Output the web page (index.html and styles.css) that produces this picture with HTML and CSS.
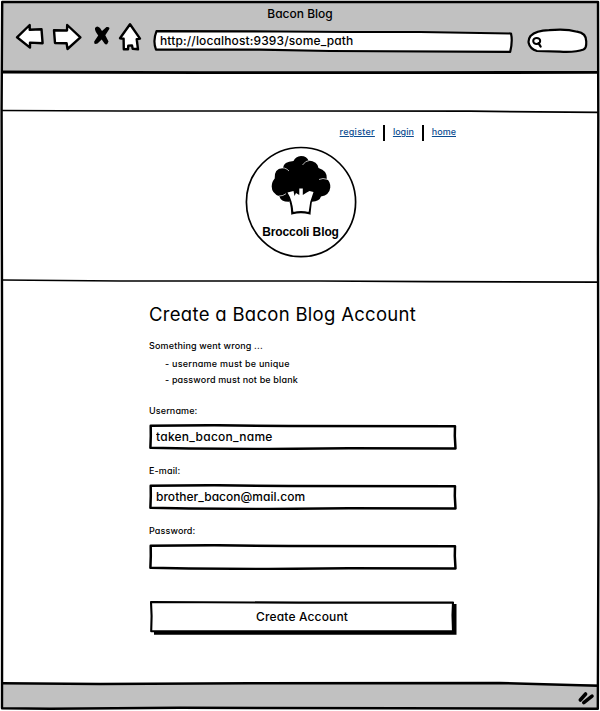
FILE: index.html
```html
<!DOCTYPE html>
<html lang="en">
<head>
<meta charset="utf-8">
<title>Bacon Blog</title>
<link rel="stylesheet" href="styles.css">
</head>
<body>
<svg class="defs" width="0" height="0" aria-hidden="true">
  <symbol id="field" viewBox="0 0 308 26">
    <path d="M1.7 1.7L65 1.2 140 2 306 2.2 305.8 12 306.5 24.5 200 24.2 120 25 40 24.4 1.4 23.8 1.8 12Z" fill="#fff" stroke="#000" stroke-width="2.5" stroke-linejoin="round"/>
  </symbol>
</svg>
<div class="window">
  <header class="chrome">
    <div class="title"><span>Bacon Blog</span></div>
    <div class="toolbar">
      <svg class="tools" width="144" height="32" viewBox="0 21 144 32" aria-hidden="true">
        <g fill="#fff" stroke="#000" stroke-width="2.4" stroke-linejoin="round">
          <path d="M17 37.3L29.7 25V29.7L41.5 29.2 42.6 43.2 30 42.6V47.6Z"/>
          <path d="M54 30.3L67 30.5 67.2 25 80.4 37.4 67.5 49 66.6 43.2 55 43Z"/>
          <path d="M130 24.2L140 38.6 136.7 39.2 138 49.3 132.7 48.8 132 45.5 128.3 45.6 128 49.3H123.8L123.6 38.7 120 38.2Z"/>
        </g>
        <path d="M95 28Q97 25 100 28L102 31 106.5 27Q110 26.5 109.3 29L105.3 35.3 108.5 41.5Q107 46 104.5 43.5L101.7 39.6 97.5 43.5Q93.6 45 94.2 41.4L98.2 35.5Q94.5 30.5 95 28Z"/>
      </svg>
      <div class="address">
        <svg width="360" height="24" viewBox="153 30 360 24" aria-hidden="true"><path d="M156.5 31.2L280 31.5 350 32 420 32 511 33.5Q512.8 41 510.2 51.8L330 51 260 49.7 156 49.6Q152.6 41 156.5 31.2Z" fill="#fff" stroke="#000" stroke-width="2.2" stroke-linejoin="round"/></svg>
        <span class="url">http://localhost:9393/some_path</span>
      </div>
      <svg class="search" width="62" height="28" viewBox="526 27 62 28" aria-hidden="true">
        <path d="M530.5 36Q536 30.5 549 30.2 566 28.5 577 31.7 587 33 586.2 43 586.5 48 583.5 49.5 576 52.5 560 51.7L537 51Q530 49 528.7 43 528 39.5 530.5 36Z" fill="#fff" stroke="#000" stroke-width="2.2"/>
        <ellipse cx="536.7" cy="41" rx="3.5" ry="3.1" fill="none" stroke="#000" stroke-width="2"/>
        <path d="M538.6 43.3L540.6 46.5" stroke="#000" stroke-width="2.3" stroke-linecap="round"/>
      </svg>
    </div>
  </header>
  <div class="strip"></div>
  <section class="masthead">
    <nav class="links"><a class="register" href="#">register</a><a class="login" href="#">login</a><a class="home" href="#">home</a></nav>
    <div class="logo">
      <svg width="112" height="112" viewBox="244.5 145.5 112 112" aria-hidden="true">
        <circle cx="300.5" cy="201.6" r="54.6" fill="#fff" stroke="#000" stroke-width="1.7"/>
        <path d="M293 160.5Q295 155.6 300.5 155.4 306.5 155.6 308 160 317 160.8 318 167.5 327 170 326.3 178.5 330 181 329.8 187 329 194.5 320.5 196 319 201 311.5 201.3L308 198H291L288.5 201.3Q280.5 201.5 278.8 195.7 271.3 193 271.2 186 271.3 181 274.2 178 273.5 168 282.5 167.5 283 161 293 160.5Z"/>
        <path d="M278 167.6Q285 166.3 288.5 170.5M302 164.5Q305 160 309 160M318.5 179Q322 177 327.5 179M278 195.6Q283 195.5 285.5 193.2" fill="none" stroke="#fff" stroke-width=".7"/>
        <path d="M287.5 193Q291.8 203 292 212.5Q300.5 210.4 308.8 212.5Q309.2 202 312.5 192.5" fill="none" stroke="#000" stroke-width="2.6"/>
        <path d="M287 192L293 190.5 294 195.5 295.5 192.5 298.8 194.5V188H302.3V194.5Q306 192 309 190.5L313 191.5Q309 201 308.2 211.3Q300.5 209.5 292.9 211.3Q292 200 287 192Z" fill="#fff"/>
      </svg>
      <span class="logo-text">Broccoli Blog</span>
    </div>
  </section>
  <main class="content">
    <h1><span>Create a Bacon Blog Account</span></h1>
    <p class="error">Something went wrong ...</p>
    <ul class="errors"><li class="e1">- username must be unique</li><li class="e2">- password must not be blank</li></ul>
    <form>
      <label for="u">Username:</label>
      <div class="field"><svg aria-hidden="true"><use href="#field"/></svg><input class="user" id="u" value="taken_bacon_name"></div>
      <label for="m">E-mail:</label>
      <div class="field"><svg aria-hidden="true"><use href="#field"/></svg><input class="mail" id="m" value="brother_bacon@mail.com"></div>
      <label for="p">Password:</label>
      <div class="field"><svg aria-hidden="true"><use href="#field"/></svg><input id="p" type="password"></div>
      <button type="button">
        <svg viewBox="0 0 308 36" aria-hidden="true"><path d="M5 31V34.8H307.5V4H303V31Z"/><path d="M2 2L150 2.6 304 2.5 303.5 15 304 31.3H2.2L2.6 16Z" fill="#fff" stroke="#000" stroke-width="2.1" stroke-linejoin="round"/></svg>
        <span>Create Account</span>
      </button>
    </form>
  </main>
  <footer class="status">
    <svg width="18" height="16" viewBox="577 690 18 16" aria-hidden="true"><path d="M580.3 700L585.6 694M583.8 702.7L592 696.2" stroke="#000" stroke-width="3.6" stroke-linecap="round"/></svg>
  </footer>
  <svg class="frame" width="600" height="711" viewBox="0 0 600 711" fill="none" stroke="#000" aria-hidden="true">
    <path d="M2.2 2H598L598.3 120 598 250 598.5 500 597.8 708.7 400 708.3 180 707.8 50 708.7 2 708.3 2.3 500 2 300 1.6 110Z" stroke-width="2.4" stroke-linejoin="round"/>
    <path d="M2 72L200 72.6 400 72.7 598 72.3" stroke-width="2.8"/>
    <path d="M2 110.5L120 111 300 111 470 111.2 598 112.3" stroke-width="1.7"/>
    <path d="M2 280L120 281 320 281 430 281.7 598 282.2" stroke-width="1.7"/>
    <path d="M2 683.2L100 684 250 683.3 500 683 598 685.7" stroke-width="2.5"/>
  </svg>
</div>
</body>
</html>
```

FILE: styles.css
```css
* { box-sizing: border-box; }
body { margin: 0; background: #fff; color: #000; font-family: Inter, "Open Sans", sans-serif; font-weight: 450; font-feature-settings: "cv11"; }
.defs { position: absolute; }
.window { position: relative; width: 600px; height: 711px; padding: 2px; overflow: hidden; display: flex; flex-direction: column; }
.frame { position: absolute; inset: 0; pointer-events: none; }
.chrome { height: 70px; background: #c1c1c1; flex: none; }
.title { height: 19px; line-height: 23px; font-size: 12px; text-align: center; }
.toolbar { display: flex; align-items: flex-start; margin-left: -2px; }
.tools { flex: none; }
.address { display: grid; width: 360px; margin: 9px 13px 0 9px; }
.address > * { grid-area: 1 / 1; }
.url { font-size: 12px; line-height: 22px; padding-left: 7px; letter-spacing: .13px; white-space: nowrap; }
.search { margin-top: 6px; flex: none; }
.strip { height: 39px; flex: none; }
.masthead { height: 170px; flex: none; padding: 14px 142px 0 147px; }
.links { display: flex; justify-content: flex-end; height: 16px; line-height: 14px; font-size: 9px; }
.links a { color: #0b4c91; text-decoration: underline; text-underline-offset: 1px; }
.links a + a { border-left: 2px solid #000; margin-left: 8px; padding-left: 8px; }
.links .register { letter-spacing: .28px; }
.logo { display: grid; width: 112px; margin: 4.5px 0 0 95.5px; }
.logo > * { grid-area: 1 / 1; }
.logo svg { margin: 0; }
.logo-text { font: bold 12px/14px "Liberation Sans", sans-serif; letter-spacing: -.1px; text-align: center; padding-top: 79px; white-space: nowrap; }
.content { width: 309px; height: 403px; flex: none; margin-left: 147px; padding-top: 19px; }
h1 { font-size: 18.5px; font-weight: 400; line-height: 28px; letter-spacing: .3px; margin: 0; white-space: nowrap; }
p { margin: 10px 0 0; }
.error, .errors, label { font-size: 9px; line-height: 16px; letter-spacing: .16px; }
.errors { list-style: none; margin: 2px 0 0; padding: 0 0 0 16px; }
.e1 { letter-spacing: .24px; }
label { display: block; letter-spacing: .12px; }
form { margin-top: 15px; }
.field { display: grid; width: 308px; height: 26px; margin: 5px 0 13px; }
.field > * { grid-area: 1 / 1; width: 308px; height: 26px; }
input { border: 0; background: none; padding: 0 7px 2px; font: inherit; font-size: 12px; font-feature-settings: inherit; color: #000; outline: 0; }
.user { letter-spacing: .25px; }
.mail { letter-spacing: .02px; }
button { display: grid; width: 308px; height: 36px; border: 0; padding: 0; margin-top: 30px; background: none; font: inherit; font-feature-settings: inherit; font-size: 12px; letter-spacing: .15px; color: #000; }
button > * { grid-area: 1 / 1; }
button svg { width: 308px; height: 36px; }
button span { line-height: 34px; padding-right: 2px; }
.status { flex: 1; background: #c1c1c1; display: flex; justify-content: flex-end; padding: 6px 3px 0; }
```
